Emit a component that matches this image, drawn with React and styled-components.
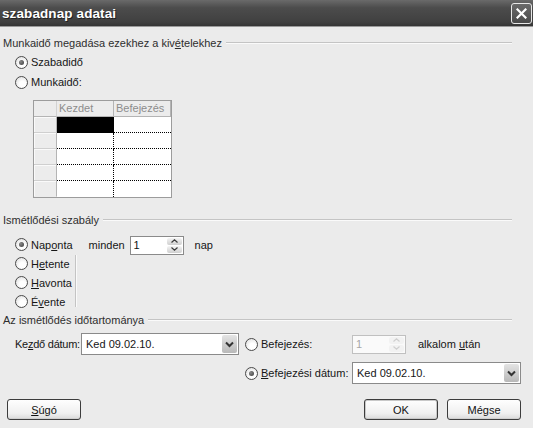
import React from "react";
import styled, { createGlobalStyle } from "styled-components";

const GlobalStyle = createGlobalStyle`
  html, body {
    margin: 0;
    padding: 0;
    background: #ebebeb;
  }
  body {
    font-family: "Liberation Sans", Arial, sans-serif;
    font-size: 11px;
    color: #161616;
  }
`;

const Window = styled.div`
  width: 533px;
  height: 428px;
  overflow: hidden;
  display: flex;
  flex-direction: column;
  background: #ebebeb;
`;

const TitleBar = styled.div`
  height: 26px;
  flex-shrink: 0;
  display: flex;
  align-items: center;
  justify-content: space-between;
  padding: 0 1px 0 2px;
  background: linear-gradient(#6a6a6a, #4c4c4c 30%, #404040 85%, #353535);
  border-bottom: 1px solid #9a9a9a;
`;

const Title = styled.span`
  font-family: "Liberation Sans", Arial, sans-serif;
  font-weight: bold;
  font-size: 13.5px;
  color: #fff;
  text-shadow: 1px 1px 0 #222;
  letter-spacing: 0.1px;
`;

const CloseButton = styled.div`
  width: 19px;
  height: 19px;
  border: 1px solid #e8e8e8;
  border-radius: 3px;
  background: linear-gradient(#6a6a6a, #4a4a4a);
  display: flex;
  align-items: center;
  justify-content: center;
`;

const Body = styled.div`
  flex: 1;
  display: flex;
  flex-direction: column;
  padding: 9px 21px 0 3px;
`;

const GroupHeader = styled.div`
  display: flex;
  align-items: center;
  height: 14px;
  margin-top: ${(p) => p.$top || 0}px;
  color: #2e2e2e;
`;

const GroupLine = styled.div`
  flex: 1;
  margin-left: 4px;
  border-top: 1px solid #c4c4c4;
  border-bottom: 1px solid #fafafa;
`;

const RadioStack = styled.div`
  display: flex;
  flex-direction: column;
  padding-left: ${(p) => p.$indent || 12}px;
  margin-top: ${(p) => p.$top || 0}px;
`;

const RadioLabel = styled.label`
  display: flex;
  align-items: center;
  height: ${(p) => p.$h || 20}px;
  gap: 3px;
  white-space: nowrap;
`;

const RadioCircle = styled.span`
  width: 11px;
  height: 11px;
  border-radius: 50%;
  border: 1px solid #4a4a4a;
  background: radial-gradient(circle at 60% 65%, #ffffff 30%, #d8d8d8 100%);
  display: flex;
  align-items: center;
  justify-content: center;
  flex-shrink: 0;

  &::after {
    content: "";
    display: ${(p) => (p.$checked ? "block" : "none")};
    width: 5px;
    height: 5px;
    border-radius: 50%;
    background: radial-gradient(circle at 35% 35%, #8a8a8a, #3a3a3a);
  }
`;

const U = styled.span`
  text-decoration: underline;
`;

const Table = styled.div`
  display: grid;
  grid-template-columns: 23px 57px 57px;
  grid-template-rows: 16px repeat(5, 16px);
  width: max-content;
  margin: 8px 0 0 30px;
  border: 1px solid #9c9c9c;
  background: #fff;
`;

const HeadCell = styled.div`
  background: #ececec;
  border-right: 1px solid ${(p) => (p.$corner ? "#d2d2d2" : "#b4b4b4")};
  border-bottom: 1px solid #b4b4b4;
  color: #8c8c8c;
  padding-left: 2px;
  line-height: 15px;
  box-sizing: border-box;
`;

const RowHead = styled.div`
  background: #ececec;
  border-right: 1px solid #b4b4b4;
  border-bottom: 1px solid ${(p) => (p.$last ? "transparent" : "#cfcfcf")};
  box-shadow: inset 1px 1px 0 #fafafa;
  box-sizing: border-box;
`;

const DataCell = styled.div`
  background: ${(p) => (p.$selected ? "#000" : "#fff")};
  border-right: ${(p) => (p.$first ? "1px dotted #000" : "none")};
  border-bottom: ${(p) => (p.$last ? "none" : "1px dotted #000")};
  box-sizing: border-box;
`;

const RuleRow = styled.div`
  display: flex;
  margin-top: 8px;
`;

const RuleDivider = styled.div`
  width: 0;
  height: 52px;
  margin: 20px 0 0 2px;
  border-left: 1px solid #c4c4c4;
  border-right: 1px solid #fafafa;
`;

const Inline = styled.div`
  display: flex;
  align-items: center;
  height: 20px;
  gap: ${(p) => p.$gap || 0}px;
  margin-left: ${(p) => p.$left || 0}px;
  margin-top: ${(p) => p.$top || 0}px;
  white-space: nowrap;
`;

const Text = styled.span`
  width: ${(p) => (p.$w ? `${p.$w}px` : "auto")};
  padding-left: ${(p) => p.$pad || 0}px;
  flex-shrink: 0;
  white-space: nowrap;
`;

const SpinBox = styled.div`
  display: flex;
  width: ${(p) => p.$w}px;
  height: 19px;
  box-sizing: border-box;
  border: 1px solid ${(p) => (p.$disabled ? "#c0c0c0" : "#8a8a8a")};
  background: ${(p) => (p.$disabled ? "#fafafa" : "#fff")};
  flex-shrink: 0;
`;

const SpinValue = styled.span`
  flex: 1;
  padding-left: 3px;
  line-height: 17px;
  color: ${(p) => (p.$disabled ? "#a6a6a6" : "#111")};
`;

const SpinButtons = styled.div`
  width: 15px;
  display: flex;
  flex-direction: column;
  gap: 1px;
  padding: 1px;
`;

const SpinButton = styled.div`
  flex: 1;
  border-radius: 2px;
  background: ${(p) =>
    p.$disabled ? "#f2f2f2" : "linear-gradient(#f4f4f4, #cfcfcf)"};
  display: flex;
  align-items: center;
  justify-content: center;
`;

const RangeGrid = styled.div`
  display: grid;
  grid-template-columns: 66px 158px 113px auto;
  grid-template-rows: 22px 22px;
  row-gap: 7px;
  align-items: center;
  margin: 6px 0 0 12px;
`;

const RangeLabel = styled.span`
  white-space: nowrap;
  letter-spacing: -0.25px;
`;

const Combo = styled.div`
  display: flex;
  align-items: center;
  width: ${(p) => p.$w}px;
  height: 22px;
  box-sizing: border-box;
  border: 1px solid #8a8a8a;
  background: #fff;
`;

const ComboText = styled.span`
  flex: 1;
  padding-left: 4px;
`;

const ComboArrow = styled.div`
  width: 15px;
  height: 18px;
  margin-right: 1px;
  border-radius: 2px;
  background: linear-gradient(#e4e4e4, #b8b8b8);
  display: flex;
  align-items: center;
  justify-content: center;
`;

const ButtonBar = styled.div`
  display: flex;
  justify-content: space-between;
  margin: 15px -9px 0 4px;
`;

const ButtonGroup = styled.div`
  display: flex;
  gap: 9px;
`;

const Button = styled.div`
  width: 74px;
  height: 21px;
  box-sizing: border-box;
  border: 1px solid #3c3c3c;
  border-radius: 3px;
  background: linear-gradient(#fefefe, #f0f0f0 70%, #dadada);
  box-shadow: ${(p) =>
    p.$default ? "inset 0 0 0 1px #c8c8c8" : "inset 0 -1px 0 #d0d0d0"};
  display: flex;
  align-items: center;
  justify-content: center;
  color: #111;
`;

const Radio = ({ checked, h, children }) => (
  <RadioLabel $h={h}>
    <RadioCircle $checked={checked} />
    <span>{children}</span>
  </RadioLabel>
);

const Spin = ({ value, width, disabled }) => (
  <SpinBox $w={width} $disabled={disabled}>
    <SpinValue $disabled={disabled}>{value}</SpinValue>
    <SpinButtons>
      <SpinButton $disabled={disabled}>
        <svg width="7" height="4" viewBox="0 0 7 4">
          <path d="M0.5 3.5 L3.5 0.8 L6.5 3.5" fill="none" stroke={disabled ? "#cfcfcf" : "#3a3a3a"} strokeWidth="1.2" />
        </svg>
      </SpinButton>
      <SpinButton $disabled={disabled}>
        <svg width="7" height="4" viewBox="0 0 7 4">
          <path d="M0.5 0.5 L3.5 3.2 L6.5 0.5" fill="none" stroke={disabled ? "#cfcfcf" : "#3a3a3a"} strokeWidth="1.2" />
        </svg>
      </SpinButton>
    </SpinButtons>
  </SpinBox>
);

const DateCombo = ({ value, width }) => (
  <Combo $w={width}>
    <ComboText>{value}</ComboText>
    <ComboArrow>
      <svg width="9" height="7" viewBox="0 0 9 7">
        <path d="M1 1.5 L4.5 5 L8 1.5" fill="none" stroke="#333" strokeWidth="2" />
      </svg>
    </ComboArrow>
  </Combo>
);

const rows = [0, 1, 2, 3, 4];

export default function App() {
  return (
    <Window>
      <GlobalStyle />
      <TitleBar>
        <Title>szabadnap adatai</Title>
        <CloseButton>
          <svg width="11" height="11" viewBox="0 0 11 11">
            <path d="M1.5 1.5 L9.5 9.5 M9.5 1.5 L1.5 9.5" stroke="#fff" strokeWidth="2.2" strokeLinecap="square" />
          </svg>
        </CloseButton>
      </TitleBar>
      <Body>
        <GroupHeader>
          <span>
            Munkaidő megadása ezekhez a kiv<U>é</U>telekhez
          </span>
          <GroupLine />
        </GroupHeader>
        <RadioStack $top={2}>
          <Radio checked>Szabadidő</Radio>
          <Radio>Munkaidő:</Radio>
        </RadioStack>
        <Table>
          <HeadCell $corner />
          <HeadCell>Kezdet</HeadCell>
          <HeadCell>Befejezés</HeadCell>
          {rows.map((r) => (
            <React.Fragment key={r}>
              <RowHead $last={r === 4} />
              <DataCell $first $selected={r === 0} $last={r === 4} />
              <DataCell $last={r === 4} />
            </React.Fragment>
          ))}
        </Table>

        <GroupHeader $top={15}>
          <span>Ismétlődési szabály</span>
          <GroupLine />
        </GroupHeader>
        <RuleRow>
          <RadioStack>
            <Radio checked h={19}>
              Nap<U>o</U>nta
            </Radio>
            <Radio h={19}>
              H<U>e</U>tente
            </Radio>
            <Radio h={19}>
              <U>H</U>avonta
            </Radio>
            <Radio h={19}>
              É<U>v</U>ente
            </Radio>
          </RadioStack>
          <RuleDivider />
          <Inline $left={12} $top={0} $gap={0}>
            <Text $w={41}>minden</Text>
            <Spin value="1" width={54} />
            <Text $pad={11}>nap</Text>
          </Inline>
        </RuleRow>

        <GroupHeader $top={2}>
          <span>Az ismétlődés időtartománya</span>
          <GroupLine />
        </GroupHeader>
        <RangeGrid>
          <RangeLabel>
            Ke<U>z</U>dő dátum:
          </RangeLabel>
          <DateCombo value="Ked 09.02.10." width={158} />
          <Text $pad={6}>
            <Radio h={22}>Befejezés:</Radio>
          </Text>
          <Inline $gap={12}>
            <Spin value="1" width={54} disabled />
            <span>
              alkalom <U>u</U>tán
            </span>
          </Inline>
          <span />
          <span />
          <Text $pad={6}>
            <Radio checked h={22}>
              <U>B</U>efejezési dátum:
            </Radio>
          </Text>
          <DateCombo value="Ked 09.02.10." width={169} />
        </RangeGrid>

        <ButtonBar>
          <Button>
            <span>
              <U>S</U>úgó
            </span>
          </Button>
          <ButtonGroup>
            <Button $default>OK</Button>
            <Button>Mégse</Button>
          </ButtonGroup>
        </ButtonBar>
      </Body>
    </Window>
  );
}
